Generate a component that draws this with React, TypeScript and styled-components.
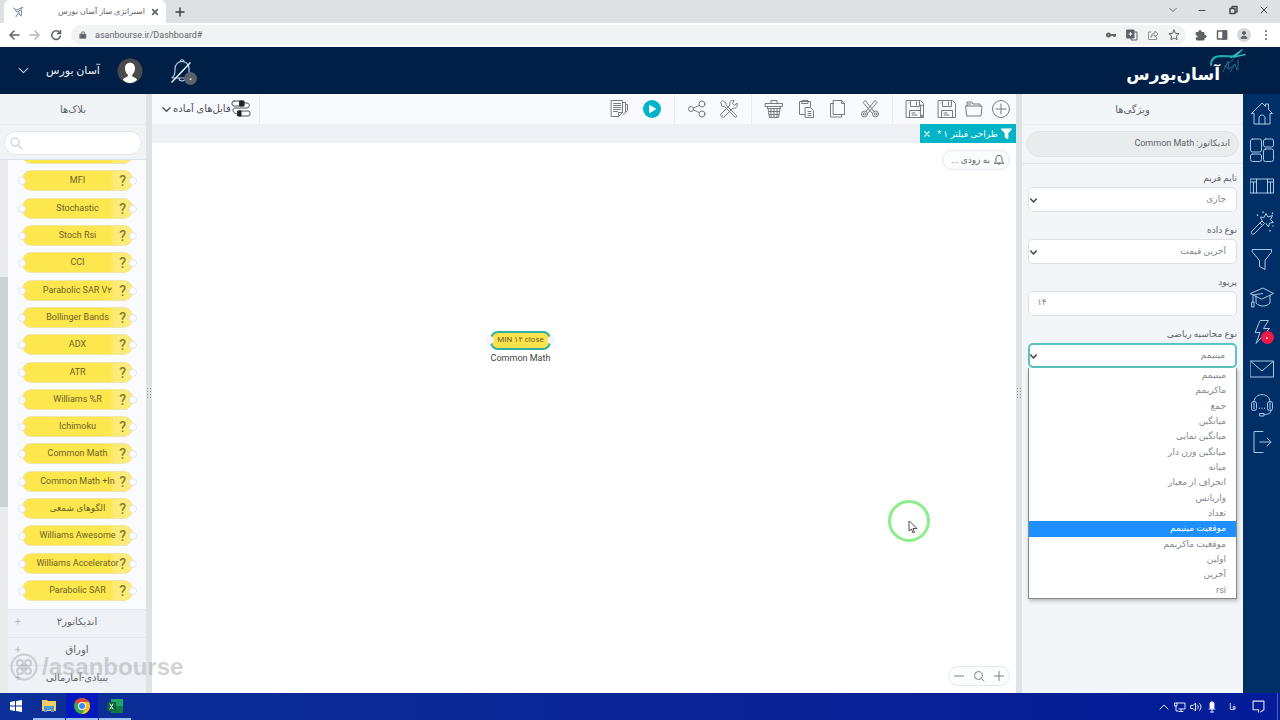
import React from "react";
import styled, { createGlobalStyle, css } from "styled-components";

const GlobalStyle = createGlobalStyle`
  *, *::before, *::after { box-sizing: border-box; }
  body {
    margin: 0;
    font-family: Roboto, "DejaVu Sans", sans-serif;
    font-size: 10px;
    line-height: 16px;
    color: #5f6368;
  }
  button, input, select { font: inherit; color: inherit; margin: 0; }
  button { background: none; border: 0; padding: 0; }
  ul { list-style: none; margin: 0; padding: 0; }
  a { color: inherit; text-decoration: none; }
`;

const Screen = styled.div`
  display: flex;
  flex-direction: column;
  min-height: 100vh;
  position: relative;
`;

/* ---------- browser chrome ---------- */

const TabStrip = styled.div`
  display: flex;
  align-items: center;
  height: 23px;
  padding: 0 10px 0 4px;
  background: #dee1e3;
`;

const BrowserTab = styled.div`
  display: flex;
  align-items: center;
  gap: 6px;
  width: 162px;
  height: 23px;
  padding: 0 7px 0 8px;
  background: #fff;
  border-radius: 6px 6px 0 0;
`;

const TabTitle = styled.span`
  flex: 1;
  font-size: 8px;
  text-align: right;
  white-space: nowrap;
`;

const IconButton = styled.button`
  display: flex;
  align-items: center;
  justify-content: center;
  flex: none;
`;

const NewTab = styled(IconButton)`
  margin-left: 8px;
`;

const WindowControls = styled.div`
  display: flex;
  align-items: center;
  gap: 19px;
  margin-left: auto;
  padding-bottom: 4px;
  color: #45494d;
`;

const AddressBar = styled.div`
  display: flex;
  align-items: center;
  height: 24px;
  padding: 0 8px;
  gap: 9px;
  background: #fff;
`;

const Omnibox = styled.div`
  display: flex;
  align-items: center;
  flex: 1;
  gap: 8px;
  height: 20px;
  padding: 0 6px 0 8px;
  border-radius: 10px;
  background: #f1f3f4;
`;

const Url = styled.input`
  flex: 1;
  min-width: 0;
  padding: 0;
  border: 0;
  outline: 0;
  background: none;
  font-size: 9px;
`;

const ToolIcons = styled.div`
  display: flex;
  align-items: center;
  gap: 9px;
`;

const ProfileDot = styled(IconButton)`
  width: 14px;
  height: 14px;
  border-radius: 50%;
  background: #d5d9dc;
`;

/* ---------- application header ---------- */

const Header = styled.header`
  display: flex;
  align-items: center;
  height: 47px;
  padding: 0 36px 0 18px;
  background: #001f47;
  color: #b9cbe0;
`;

const UserMenu = styled.button`
  display: flex;
  align-items: center;
  gap: 17px;
`;

const UserName = styled.span`
  color: #f0f4f8;
  font-size: 11px;
`;

const AlertButton = styled.button`
  position: relative;
  display: flex;
  margin-left: 26px;
`;

const GreyBadge = styled.span`
  position: absolute;
  right: -2px;
  bottom: -1px;
  width: 13px;
  height: 13px;
  border-radius: 50%;
  background: #5b6269;
  color: #fff;
  font-size: 13px;
  line-height: 13px;
  text-align: center;
`;

const Brand = styled.div`
  position: relative;
  display: flex;
  align-items: center;
  margin-left: auto;
  padding: 6px 24px 0 0;
  font: bold 17px/32px "DejaVu Sans", sans-serif;
  color: #fff;

  svg { position: absolute; right: -2px; top: -4px; }
`;

/* ---------- workspace ---------- */

const Workspace = styled.div`
  display: flex;
  flex: 1;
  min-height: 0;
`;

const Splitter = styled.div`
  display: flex;
  align-items: center;
  justify-content: center;
  flex: none;
  width: 6px;
  background: #dfe3e5;
`;

const BlocksPanel = styled.aside`
  display: flex;
  flex-direction: column;
  flex: none;
  width: 146px;
  background: #f1f4f7;
`;

const PanelTitle = styled.h2`
  margin: 0;
  height: 31px;
  font-size: 10px;
  font-weight: 400;
  line-height: 31px;
  text-align: center;
  border-bottom: 1px solid #e4e9ee;
`;

const SearchBox = styled.label`
  display: flex;
  align-items: center;
  height: 24px;
  margin: 6px 4px 4px;
  padding: 0 4px;
  border: 1px solid #e2e6ea;
  border-radius: 12px;
  background: #fff;
  color: #d6d6d4;

  input { flex: 1; min-width: 0; border: 0; outline: 0; background: none; }
`;

const BlocksBody = styled.div`
  display: flex;
  flex: 1;
  min-height: 0;
  border-top: 1px solid #dde3ea;
`;

const ScrollTrack = styled.div`
  display: flex;
  flex-direction: column;
  width: 8px;
  background: #e8ebec;

  &::before { content: ""; flex: 117; }
  &::after { content: ""; flex: 186; }
`;

const ScrollThumb = styled.div`
  flex: 231;
  background: #cdd2d4;
`;

const BlocksColumn = styled.div`
  display: flex;
  flex: 1;
  flex-direction: column;
  min-width: 0;
`;

const BlockViewport = styled.div`
  display: flex;
  flex: 1;
  min-height: 0;
  overflow: hidden;
  background: #f9fbfe;
`;

const BlockList = styled.ul`
  display: flex;
  flex: 1;
  flex-direction: column;
  justify-content: space-between;
  margin-top: -17px;
  padding: 0 13px 8px 14px;
`;

const Block = styled.li`
  position: relative;
  height: 21px;
  border: 1px solid #f1e6a8;
  border-radius: 9px;
  background: linear-gradient(to right, #fce74e 80%, #fdeb78 84%);
  color: #6c6324;
  font-size: 9px;
  line-height: 18px;
  text-align: center;
  white-space: nowrap;

  &::before, &::after {
    content: "";
    position: absolute;
    top: 6px;
    width: 8px;
    height: 8px;
    border: 1px solid #e4e4ee;
    border-radius: 50%;
    background: #fbfbff;
  }
  &::before { left: -5px; }
  &::after { right: -5px; }
`;

const Help = styled.button`
  position: absolute;
  top: 0;
  right: 6px;
  color: #857838;
  font-size: 14px;
  font-weight: 500;
  line-height: 20px;
`;

const Category = styled.button`
  display: flex;
  align-items: center;
  justify-content: center;
  position: relative;
  height: 28px;
  padding-bottom: 3px;
  border-top: 1px solid #e3e8ed;
  background: #eef1f6;
  font-size: 10px;

  &::before {
    content: "+";
    position: absolute;
    left: 7px;
    color: #b4b9bf;
  }
`;

const Editor = styled.main`
  display: flex;
  flex: 1;
  flex-direction: column;
  min-width: 0;
`;

const Toolbar = styled.div`
  display: flex;
  align-items: center;
  height: 30px;
  padding: 0 5px 0 8px;
  background: #f8fafd;
  color: #777c81;
`;

const ReadyFiles = styled.button`
  display: flex;
  align-items: center;
  height: 30px;
  padding: 0 8px 0 2px;
  border-right: 1px solid #e6eaee;
  color: #4c5054;
  font-size: 10px;

  span { margin-left: 2px; }
`;

const Tools = styled.div`
  display: flex;
  align-items: center;
  gap: 12px;
  margin-left: auto;
`;

const TightTools = styled.div`
  display: flex;
  gap: 7px;
`;

const ToolDivider = styled.span`
  width: 1px;
  height: 30px;
  background: #e9edf1;
`;

const DocTabs = styled.div`
  display: flex;
  justify-content: flex-end;
  height: 19px;
  background: #edf0f5;
`;

const DocTab = styled.div`
  display: flex;
  align-items: center;
  width: 96px;
  gap: 3px;
  padding: 0 4px 0 4px;
  background: #00b3c6;
  color: #fff;
  font-size: 9px;

  span { flex: 1; text-align: right; white-space: nowrap; }
`;

const Canvas = styled.div`
  position: relative;
  flex: 1;
  background: #fff;
`;

const pill = css`
  position: absolute;
  display: flex;
  align-items: center;
  height: 20px;
  border: 1px solid #e6eaee;
  border-radius: 10px;
  background: #fcfdfe;
`;

const SoonPill = styled.div`
  ${pill}
  top: 7px;
  right: 6px;
  gap: 3px;
  padding: 0 4px 0 8px;
  font-size: 9px;
`;

const ZoomPill = styled.div`
  ${pill}
  right: 6px;
  bottom: 7px;
  gap: 8px;
  padding: 0 4px;
  color: #7c8084;
`;

const Node = styled.div`
  position: absolute;
  left: 338px;
  top: 188px;
  width: 61px;
  text-align: center;
  white-space: nowrap;
  color: #3f4245;
  font-size: 9px;
`;

const NodeBody = styled.div`
  position: relative;
  height: 19px;
  border: 2px solid #2fb0a4;
  border-radius: 8px;
  background: #fce14a;
  color: #6c6324;
  font-size: 8px;
  line-height: 14px;

  &::before, &::after {
    content: "";
    position: absolute;
    top: 3px;
    width: 8px;
    height: 8px;
    border: 1px solid #eceef2;
    border-radius: 50%;
    background: #f6f7fa;
  }
  &::before { left: -6px; }
  &::after { right: -6px; }
`;

const Pointer = styled.div`
  position: absolute;
  left: 736px;
  top: 357px;
  width: 42px;
  height: 42px;
  padding: 18px 0 0 17px;
  border: 3px solid #8aef8a;
  border-radius: 50%;
`;

/* ---------- properties ---------- */

const Properties = styled.aside`
  flex: none;
  width: 221px;
  background: #f3f6f8;
`;

const PropertiesTitle = styled(PanelTitle)`
  border-color: #e9edf0;
`;

const IndicatorName = styled.div`
  margin: 6px 4px;
  height: 26px;
  padding: 0 8px;
  border: 1px solid #dfe3e4;
  border-radius: 13px;
  background: #e9eced;
  font-size: 9px;
  line-height: 23px;
`;

const Fields = styled.form`
  display: flex;
  flex-direction: column;
  gap: 10px;
  padding: 6px 6px 0;
  border-top: 1px solid #e4e8ea;
`;

const Field = styled.div`
  position: relative;
  display: flex;
  flex-direction: column;
  gap: 1px;

  label { font-size: 9px; line-height: 16px; }
  svg { position: absolute; left: 2px; bottom: 8px; pointer-events: none; color: #3c4043; }
`;

const control = css<{ $open?: boolean }>`
  width: 100%;
  height: 25px;
  border: 1px solid #dde1e5;
  border-radius: 5px;
  outline: 0;
  background: #fff;
  color: #85898d;
  font-size: 9px;
  ${(p) => p.$open && css`border: 2px solid #5cc3bf;`}
`;

const Select = styled.select<{ $open?: boolean }>`
  ${control}
  appearance: none;
  padding: 0 10px 2px;
`;

const TextInput = styled.input`
  ${control}
  padding: 0 8px 3px;
`;

const OptionList = styled.ul`
  position: absolute;
  top: 100%;
  left: 0;
  right: 0;
  display: grid;
  grid-auto-rows: 1fr;
  height: 231px;
  border: 1px solid #85898c;
  border-top: 0;
  background: #fff;
  box-shadow: 1px 2px 4px rgba(0, 0, 0, 0.25);
`;

const Option = styled.li<{ $active?: boolean }>`
  padding: 0 10px;
  color: ${(p) => (p.$active ? "#fff" : "#85898d")};
  background: ${(p) => (p.$active ? "#1e8fff" : "none")};
  font-size: 9px;
  line-height: 15px;
`;

const SideNav = styled.nav`
  flex: none;
  width: 37px;
  padding-top: 7px;
  background: #002f67;
  color: #a9c6e4;
`;

const NavList = styled.ul`
  display: flex;
  flex-direction: column;
  justify-content: space-between;
  align-items: center;
  height: 353px;

  a { position: relative; display: block; height: 24px; }
`;

const RedBadge = styled.span`
  position: absolute;
  right: 0;
  bottom: 0;
  width: 13px;
  height: 13px;
  border-radius: 50%;
  background: #f0194a;
  color: #fff;
  font-size: 13px;
  line-height: 13px;
  text-align: center;
`;

/* ---------- desktop ---------- */

const Watermark = styled.div`
  position: absolute;
  left: 10px;
  bottom: 38px;
  display: flex;
  align-items: center;
  gap: 4px;
  color: rgba(165, 168, 172, 0.5);
  font: bold 24px/30px "Liberation Sans", sans-serif;
  pointer-events: none;
`;

const Taskbar = styled.footer`
  display: flex;
  height: 27px;
  padding-right: 2px;
  background: linear-gradient(to right, #0c2f98, #0a2596 50%, #041c98);
  color: #fff;
`;

const TaskButton = styled.button<{ $state?: "open" | "active" }>`
  display: flex;
  align-items: center;
  justify-content: center;
  width: 32px;
  margin-right: 1px;
  border-bottom: 2px solid ${(p) => (p.$state ? "#9cc0f2" : "transparent")};
  background: ${(p) => (p.$state === "active" ? "#0418bd" : "none")};
`;

const Tray = styled.div`
  display: flex;
  align-items: center;
  gap: 4px;
  margin-left: auto;
  padding-right: 12px;
  border-right: 1px solid #4a5fb8;
  color: #dfe6f8;
  font-size: 9px;

  span { margin: 0 12px 0 7px; }
`;

/* ---------- icons ---------- */

const Svg = styled.svg`
  display: block;
  flex: none;
  fill: none;
  stroke: currentColor;
  stroke-linecap: round;
  stroke-linejoin: round;
`;

type IconProps = { s?: number; b?: number; w?: number; children: React.ReactNode };

const Icon = ({ s = 20, b = 20, w = 1, children }: IconProps) => (
  <Svg width={s} height={s} viewBox={`0 0 ${b} ${b}`} strokeWidth={w} aria-hidden="true">
    {children}
  </Svg>
);

const Chevron = ({ s = 10, w = 1 }: { s?: number; w?: number }) => (
  <Icon s={s} b={10} w={w}><path d="M1 3l4 4 4-4" /></Icon>
);

const fileTools: [string, React.ReactNode][] = [
  ["باز کردن", <path key="a" d="M3 7V3h5l1 2h7v2M2 7h16l-1 10H3zM4 5h3" />],
  ["جدید", <g key="b"><circle cx="10" cy="10" r="8.5" /><path d="M10 5v10M5 10h10" /></g>],
];

const disk = (
  <path d="M1.500 1.500h14l3 3v14h-17zM5.500 1.500v6h9v-6M11.500 3v3M4.500 18.500v-7h11v7M7 14h3M7 16h5M4 4v0" />
);

const navIcons: [string, React.ReactNode][] = [
  ["خانه", <path key="i" d="M1.500 12.500L12 2l3.500 3.500V3h3v5.500l4 4H20V23H4V12.500zM9 23v-6c0-4 6-4 6 0v6" />],
  ["داشبورد", <g key="i"><rect x="0.500" y="1" width="11" height="13" rx="2" /><rect x="13.500" y="1" width="10" height="8" rx="2" /><rect x="0.500" y="16" width="11" height="7.500" rx="2" /><rect x="13.500" y="11" width="10" height="12.500" rx="2" /></g>],
  ["نما", <path key="i" d="M.5 5h23v14H.5zM.5 8h6M17.500 8h6M3.500 8v11M6.500 5v14M17.500 5v14M20.500 8v11" />],
  ["جادو", <g key="i"><path d="M1.500 20.500L12 10l2.500 2.500L4 23c-1.500 1-3.500-1-2.500-2.500zM10 12l2.500 2.500M12 9.500L10.500 6l3.500.5L16 2.500l2 3.500 4.500-1.500L20.500 8.500l3 3-4 .5-1 4-2.500-3.500" /><path d="M7.500 4v.5M13 1v.5M22.500 2v.5M20 19.500v.5M23 15v0" strokeWidth="1.500" /></g>],
  ["فیلتر", <path key="i" d="M2.500 2.500h19v2.500l-6.500 8.500v9l-5.500-3v-6L2.500 5z" />],
  ["آموزش", <g key="i"><path d="M.5 9.500L13 4l10.500 5.500L12 15zM6 12v7c3 4 11 4 14 0v-7.500M12.500 9.500L3 11v7M2 18h2v5H2z" /></g>],
  ["هشدار", <path key="i" d="M10.500.5h8l-5 8h6L6 23.500l4-11H5.500z" />],
  ["پیام", <path key="i" d="M.5 4h23v16H.5zM1 4.500l11 9.500 11-9.500" />],
  ["پشتیبانی", <g key="i"><path d="M4 9c0-10 16-10 16 0M21 17c0 4-3 4.500-7 4.500M10 20.500h4v2.500h-4z" /><rect x="1.500" y="8.500" width="5" height="9" rx="2" /><rect x="17.500" y="8.500" width="5" height="9" rx="2" /><path d="M9.500 15v.5M12 15v.5M14.500 15v.5M4 10v6M20 10v6" /></g>],
  ["خروج", <path key="i" d="M13 1.500H4v21h9M10 12h11M17 8l4 4-4 4" />],
];

const blocks = [
  "RSI", "MFI", "Stochastic", "Stoch Rsi", "CCI", "Parabolic SAR V۲", "Bollinger Bands", "ADX", "ATR",
  "Williams %R", "Ichimoku", "Common Math", "Common Math +In", "الگوهای شمعی", "Williams Awesome",
  "Williams Accelerator", "Parabolic SAR",
];

const options = [
  "مینیمم", "ماکزیمم", "جمع", "میانگین", "میانگین نمایی", "میانگین وزن دار", "میانه", "انحراف از معیار",
  "واریانس", "تعداد", "موقعیت مینیمم", "موقعیت ماکزیمم", "اولین", "آخرین", "rsi",
];

const Grip = () => (
  <Svg width="4" height="14" viewBox="0 0 4 14"><path d="M.5 1v12M3.500 1v12" strokeDasharray="1 2" stroke="#979da2" strokeLinecap="butt" /></Svg>
);

const BirdMark = ({ s }: { s: number }) => (
  <Icon s={s} b={36} w={1}>
    <path d="M1 17C1 10 5 8 11 8l13 .5" stroke="#1fb0b0" strokeWidth="2" />
    <path d="M21 9.500L32 2M24 9l11-2.500M24 9l6-5" stroke="#2fb9bd" strokeWidth="1.500" />
    <path d="M24 11l-9 7M13 24l5-11 1 8M20 24l5-8 2 6M28 12v10M15 18l4 3 6-5" stroke="#27677f" />
  </Icon>
);

export default function App() {
  return (
    <Screen>
      <GlobalStyle />

      <TabStrip>
        <BrowserTab>
          <Icon s={12} b={36} w={3}><path d="M4 6l10 6 18-8M10 14l8 4 12-10M12 32l8-12 6 10M28 14v14" stroke="#6d8290" /></Icon>
          <TabTitle dir="rtl">استراتژی ساز آسان بورس</TabTitle>
          <IconButton aria-label="Close tab"><Icon s={8} b={10} w={2}><path d="M2 2l6 6M8 2l-6 6" /></Icon></IconButton>
        </BrowserTab>
        <NewTab aria-label="New tab"><Icon s={12} b={12} w={1.5}><path d="M6 2v8M2 6h8" stroke="#3c4043" /></Icon></NewTab>
        <WindowControls>
          <Chevron s={8} />
          <IconButton aria-label="Minimize"><Icon s={12} b={12}><path d="M3 6.500h6" /></Icon></IconButton>
          <IconButton aria-label="Restore"><Icon s={12} b={12} w={1.5}><path d="M3 4.500h5v5H3zM5 4V2.500h5V8H8.500" /></Icon></IconButton>
          <IconButton aria-label="Close"><Icon s={12} b={12}><path d="M3 3l6 6M9 3l-6 6" /></Icon></IconButton>
        </WindowControls>
      </TabStrip>

      <AddressBar>
        <IconButton aria-label="Back"><Icon s={12} b={12} w={1.5}><path d="M11 6H2M6 2L2 6l4 4" /></Icon></IconButton>
        <IconButton aria-label="Forward"><Icon s={12} b={12} w={1.5}><path d="M1 6h9M6 2l4 4-4 4" stroke="#b4b8bb" /></Icon></IconButton>
        <IconButton aria-label="Reload"><Icon s={12} b={12} w={1.5}><path d="M9.500 3.500A4.300 4.300 0 1 0 10.300 7M10.500 1.500v3h-3" /></Icon></IconButton>
        <Omnibox>
          <Icon s={8} b={10}><rect x="1.500" y="4" width="7" height="5" fill="currentColor" /><path d="M3 4V2.500c0-2 4-2 4 0V4" /></Icon>
          <Url aria-label="Address" defaultValue="asanbourse.ir/Dashboard#" />
          <ToolIcons>
            <Icon s={12} b={12} w={2}><circle cx="3.500" cy="6" r="1.500" /><path d="M6 6h5M9.500 6v2" strokeLinecap="butt" /></Icon>
            <Icon s={12} b={12}><rect x="1" y="1" width="7" height="8" fill="currentColor" /><path d="M8 3h3v8H5V9" /><path d="M3 5h3M4.500 3.500v3" stroke="#fff" /></Icon>
            <Icon s={12} b={12}><path d="M4 3H1.500v7.500h8V8M4 8c0-3 2-4 4-4V2l3 3-3 3V6c-2 0-3 0-4 2z" stroke="#8d9195" /></Icon>
            <Icon s={12} b={12}><path d="M6 1l1.500 3.300 3.500.4-2.600 2.400.7 3.600L6 9l-3.100 1.700.7-3.600L1 4.700l3.500-.4z" /></Icon>
          </ToolIcons>
        </Omnibox>
        <ToolIcons>
          <Icon s={12} b={12}><path d="M1.500 3.500h2.500c-1-3 3-3 2 0h3v3c3-1 3 3 0 2v2.500H1.500V8.500c2 0 2-2.500 0-2.500z" fill="currentColor" /></Icon>
          <Icon s={12} b={12} w={1.5}><path d="M1.500 2h9v8h-9z" /><path d="M7 2h3.500v8H7z" fill="currentColor" /></Icon>
          <ProfileDot aria-label="Profile"><Icon s={10} b={10}><circle cx="5" cy="3" r="1.500" fill="currentColor" /><path d="M2 8c0-2.500 6-2.500 6 0z" fill="currentColor" /></Icon></ProfileDot>
          <Icon s={12} b={12} w={2}><path d="M6 2v0M6 6v0M6 10v0" /></Icon>
        </ToolIcons>
      </AddressBar>

      <Header>
        <UserMenu>
          <Chevron s={11} />
          <UserName dir="rtl">آسان بورس</UserName>
          <Icon s={26} b={26}>
            <circle cx="13" cy="13" r="12.500" fill="#4a4a4c" stroke="none" />
            <path d="M6 22c0-3 5-2 5-5-2-2-3-4-3-7 0-7 10-7 10 0 0 3-1 5-3 7 0 3 5 2 5 5-4 4-10 4-14 0z" fill="#fff" stroke="none" />
          </Icon>
        </UserMenu>
        <AlertButton aria-label="Notifications">
          <Icon s={26} b={26} w={1.2}>
            <path d="M3 20c3-3 3-5 3-9 0-10 14-10 14 0 0 4 0 6 3 9H3zM10 20c0 4 6 4 6 0M11 4c0-3 4-3 4 0" />
            <path d="M3 24L21 5" strokeWidth="1.500" stroke="#e8f0f8" />
          </Icon>
          <GreyBadge>۰</GreyBadge>
        </AlertButton>
        <Brand dir="rtl">
          آسان‌بورس
          <BirdMark s={36} />
        </Brand>
      </Header>

      <Workspace>
        <BlocksPanel>
          <PanelTitle dir="rtl">بلاک‌ها</PanelTitle>
          <SearchBox>
            <Icon s={14} b={14} w={1.5}><circle cx="6" cy="6" r="4" /><path d="M9 9l4 4" /></Icon>
            <input type="text" aria-label="جستجو" />
          </SearchBox>
          <BlocksBody>
            <ScrollTrack><ScrollThumb /></ScrollTrack>
            <BlocksColumn>
              <BlockViewport>
                <BlockList>
                  {blocks.map((name) => (
                    <Block key={name}>
                      {name}
                      <Help aria-label={`راهنما ${name}`}>?</Help>
                    </Block>
                  ))}
                </BlockList>
              </BlockViewport>
              <Category dir="rtl">اندیکاتور۲</Category>
              <Category dir="rtl">اوراق</Category>
              <Category dir="rtl">بنیادی-آمارمالی</Category>
            </BlocksColumn>
          </BlocksBody>
        </BlocksPanel>

        <Splitter><Grip /></Splitter>

        <Editor>
          <Toolbar>
            <ReadyFiles>
              <Chevron s={9} w={1.5} />
              <span dir="rtl">فایل‌های آماده</span>
              <Icon s={20} b={20}>
                <rect x="1" y="2" width="12" height="5" rx="2" /><rect x="7" y="12" width="12" height="5" rx="2" />
                <path d="M9 2h4v5H9zM7 12h3v5H7z" fill="#222" stroke="#222" /><path d="M13 4h3c3 0 3 5 0 5H4c-3 0-3 6 3 6" />
              </Icon>
            </ReadyFiles>
            <Tools>
              <IconButton aria-label="گزارش"><Icon><path d="M1.500 1.500h11v12l-4 4h-7zM3.500 4.500h7M3.500 6.500h7M3.500 8.500h7M3.500 10.500h7M3.500 12.500h4M13 3.500h2.500v10l-2.500 2M15.500 5.500h2v6l-2 2M8.500 17v-3.500h4" /></Icon></IconButton>
              <IconButton aria-label="اجرا"><Icon><circle cx="10" cy="10" r="9" fill="#00b3c6" stroke="none" /><path d="M8 6.500l5.500 3.500-5.500 3.500z" fill="#fff" stroke="#fff" /></Icon></IconButton>
              <ToolDivider />
              <IconButton aria-label="اشتراک"><Icon><circle cx="4" cy="10" r="2.500" /><circle cx="15" cy="5" r="3" /><circle cx="15" cy="15" r="3" /><path d="M6.500 9L12 6.500M6.500 11l5.500 2.500" /></Icon></IconButton>
              <IconButton aria-label="ابزار"><Icon><path d="M2 3l1.500-1.500L7 4v2l10.500 10.500c1 1-.5 2.500-1.500 1.500L5.500 7.500h-2zM18 4.500l-2.500 1.500-2-1.500 1.500-3c-3-.5-5 1.500-4 4.500L2 15c-1 2 1 4 3 3l9-9c3 1 5-1.500 4-4.500zM3.500 16.500v0" /></Icon></IconButton>
              <ToolDivider />
              <IconButton aria-label="حذف"><Icon><path d="M1.500 4.500h17v3h-17zM7 4V1.500h6V4M3.500 7.500v2h13v-2M4 9.500l1.500 9h9l1.500-9M7 10v8M10 10v8M13 10v8M5 12.500h10M5 15.500h10" /></Icon></IconButton>
              <IconButton aria-label="چسباندن"><Icon><path d="M9 15.500H3.500v-13h11v5M6 3V1.500h6v3H6zM9.500 8.500h5l3 3v7h-8zM12 12.500h3M12 14.500h3M12 16.500h3" /></Icon></IconButton>
              <IconButton aria-label="رونوشت"><Icon><path d="M5.500 1.500h8l3 3v11h-11zM5.500 4.500h-3v13.500h11v-2.500M13.500 1.500v3h3" /></Icon></IconButton>
              <IconButton aria-label="برش"><Icon><circle cx="4.500" cy="15" r="3" /><circle cx="15.500" cy="15" r="3" /><circle cx="4.500" cy="15" r="1.200" /><circle cx="15.500" cy="15" r="1.200" /><path d="M6 12.500L15 1.500l2 2-8.500 10M14 12.500L5 1.500l-2 2 8.500 10" /></Icon></IconButton>
              <ToolDivider />
              <IconButton aria-label="ذخیره با نام"><Icon>{disk}<path d="M16 6l2.500 1v8l-1.500 3-1.500-3z" fill="#f8fafd" /></Icon></IconButton>
              <TightTools>
                <IconButton aria-label="ذخیره"><Icon>{disk}</Icon></IconButton>
                {fileTools.map(([label, shape]) => (
                  <IconButton key={label} aria-label={label}><Icon>{shape}</Icon></IconButton>
                ))}
              </TightTools>
            </Tools>
          </Toolbar>

          <DocTabs>
            <DocTab>
              <IconButton aria-label="بستن"><Icon s={6} b={8} w={1.5}><path d="M1 1l6 6M7 1L1 7" /></Icon></IconButton>
              <span dir="rtl">طراحی فیلتر ۱ *</span>
              <Icon s={11} b={12}><path d="M.5 1h11L7.500 6v6l-3-2V6z" fill="#fff" /></Icon>
            </DocTab>
          </DocTabs>

          <Canvas>
            <SoonPill>
              <span dir="rtl">به زودی ...</span>
              <Icon s={12} b={12}><path d="M1.500 9C3 8 3 7 3 5c0-5 6-5 6 0 0 2 0 3 1.500 4zM5 9c0 2 2 2 2 0" /></Icon>
            </SoonPill>
            <Node>
              <NodeBody>MIN ۱۴ close</NodeBody>
              Common Math
            </Node>
            <Pointer>
              <Icon s={12} b={12}><path d="M1 0v10l2.500-2 1.500 4 1.500-.6L5 7.500h3.500z" fill="#fff" stroke="#55504c" /></Icon>
            </Pointer>
            <ZoomPill>
              <IconButton aria-label="کوچک‌نمایی"><Icon s={12} b={12}><path d="M1.500 6h9" /></Icon></IconButton>
              <IconButton aria-label="اندازه عادی"><Icon s={12} b={12}><circle cx="5.500" cy="5.500" r="4" /><path d="M8.500 8.500l2.500 2.500" /></Icon></IconButton>
              <IconButton aria-label="بزرگ‌نمایی"><Icon s={12} b={12}><path d="M1.500 6h9M6 1.500v9" /></Icon></IconButton>
            </ZoomPill>
          </Canvas>
        </Editor>

        <Splitter><Grip /></Splitter>

        <Properties dir="rtl">
          <PropertiesTitle>ویژگی‌ها</PropertiesTitle>
          <IndicatorName>اندیکاتور: Common Math</IndicatorName>
          <Fields>
            <Field>
              <label htmlFor="timeframe">تایم فریم</label>
              <Select id="timeframe"><option>جاری</option></Select>
              <Chevron s={7} w={2} />
            </Field>
            <Field>
              <label htmlFor="datatype">نوع داده</label>
              <Select id="datatype"><option>آخرین قیمت</option></Select>
              <Chevron s={7} w={2} />
            </Field>
            <Field>
              <label htmlFor="period">پریود</label>
              <TextInput id="period" dir="ltr" defaultValue="۱۴" />
            </Field>
            <Field>
              <label htmlFor="mathtype">نوع محاسبه ریاضی</label>
              <Select id="mathtype" $open>
                {options.map((o) => <option key={o}>{o}</option>)}
              </Select>
              <Chevron s={7} w={2} />
              <OptionList role="listbox">
                {options.map((o) => (
                  <Option key={o} role="option" aria-selected={o === "موقعیت مینیمم"} $active={o === "موقعیت مینیمم"}>{o}</Option>
                ))}
              </OptionList>
            </Field>
          </Fields>
        </Properties>

        <SideNav>
          <NavList>
            {navIcons.map(([label, shape], i) => (
              <li key={label}>
                <a href="#" aria-label={label}>
                  <Icon s={24} b={24}>{shape}</Icon>
                  {i === 6 && <RedBadge>۰</RedBadge>}
                </a>
              </li>
            ))}
          </NavList>
        </SideNav>
      </Workspace>

      <Taskbar>
        <TaskButton aria-label="Start"><Icon s={12} b={12}><path d="M0 2l5-1v4.500H0zM6 1l6-1v5.500H6zM0 6.500h5V11l-5-1zM6 6.500h6V12l-6-1z" fill="#fff" stroke="none" /></Icon></TaskButton>
        <TaskButton aria-label="Explorer" $state="open"><Icon s={14} b={14}><path d="M0 1h5l1 1h8v10H0z" fill="#f4cd62" stroke="none" /><path d="M2 7h10v6H9v-2H5v2H2z" fill="#4f9bd6" stroke="none" /></Icon></TaskButton>
        <TaskButton aria-label="Chrome" $state="active">
          <Icon s={16} b={16}>
            <g stroke="none"><circle cx="8" cy="8" r="8" fill="#34a853" /><path d="M8 8L1 4C4-1 12-1 15 4z" fill="#ea4335" /><path d="M8 8V4h7c3 6-1 12-7 12l3.500-6z" fill="#fbc116" /><circle cx="8" cy="8" r="4" fill="#fff" /><circle cx="8" cy="8" r="3" fill="#4285f4" /></g>
          </Icon>
        </TaskButton>
        <TaskButton aria-label="Excel" $state="open">
          <Icon s={16} b={16}>
            <g stroke="none"><path d="M4 1h12v14H4z" fill="#21a366" /><path d="M10 8h6v7H4V8z" fill="#107c41" /><path d="M0 4h9v9H0z" fill="#0c6335" /></g><path d="M3 6l3 5M6 6l-3 5" stroke="#fff" />
          </Icon>
        </TaskButton>
        <Tray>
          <Icon s={12} b={12}><path d="M2 8l4-4 4 4" /></Icon>
          <Icon s={12} b={12}><path d="M3 2h8v6H5M7 8v2M5 10.500h4M1 2h2v3H1zM2 5v5h2" /></Icon>
          <Icon s={12} b={12}><path d="M1 4.500h2L5.500 2v8L3 7.500H1zM7.500 4c1 1 1 3 0 4M9.500 2.500c2 2 2 5 0 7" /></Icon>
          <Icon s={12} b={12}><rect x="4" y="1" width="4" height="7" rx="1.500" fill="#fff" /><path d="M3 8h6M6 8v3M4.500 11h3" /></Icon>
          <span dir="rtl">فا</span>
          <Icon s={13} b={12}><path d="M1 1h10v8M1 1v8h5v2M11 9l-3 2z" /></Icon>
        </Tray>
      </Taskbar>

      <Watermark>
        <Icon s={28} b={28} w={2}>
          <circle cx="14" cy="14" r="12.500" /><circle cx="10" cy="10" r="3" /><circle cx="18" cy="10" r="3" /><circle cx="10" cy="18" r="3" /><circle cx="18" cy="18" r="3" /><path d="M12 12l4 4M16 12l-4 4" />
        </Icon>
        /asanbourse
      </Watermark>
    </Screen>
  );
}
